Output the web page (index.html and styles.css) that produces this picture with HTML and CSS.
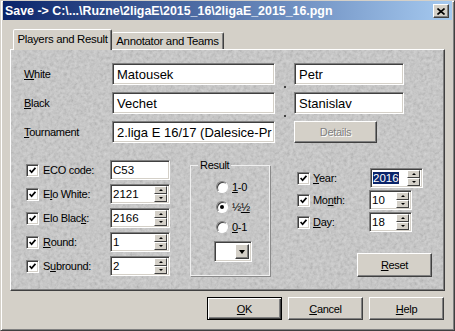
FILE: index.html
```html
<!DOCTYPE html>
<html lang="en">
<head>
  <meta charset="UTF-8" />
  <title>Save</title>
  <link rel="stylesheet" href="styles.css">
</head>
<body>
  <div class="window">
    <div class="titlebar">
      <span class="title">Save -&gt; C:\...\Ruzne\2ligaE\2015_16\2ligaE_2015_16.pgn</span>
      <div class="close">
        <svg width="8" height="7" viewBox="0 0 8 7"><path d="M0.5 0.5 L7.5 6.5 M7.5 0.5 L0.5 6.5" stroke="#000" stroke-width="1.6" fill="none"/></svg>
      </div>
    </div>

    <div class="dialog">
      <div class="tabs">
        <div class="tab active">Players and Result</div>
        <div class="tab">Annotator and Teams</div>
      </div>

      <div class="panel">
        <div class="names">
          <label><u>W</u>hite</label>
          <div class="field big">Matousek</div>
          <span class="dot"></span>
          <div class="field big">Petr</div>

          <label><u>B</u>lack</label>
          <div class="field big">Vechet</div>
          <span class="dot"></span>
          <div class="field big">Stanislav</div>

          <label><u>T</u>ournament</label>
          <div class="field big">2.liga E 16/17 (Dalesice-Pr</div>
          <span></span>
          <div class="btn disabled details">Details</div>
        </div>

        <div class="lower">
          <div class="col-left">
            <div class="row">
              <span class="check"><svg width="7" height="7" viewBox="0 0 7 7"><path d="M0.6 3 L2.6 5.2 L6.4 0.8" stroke="#000" stroke-width="1.7" fill="none"/></svg></span>
              <span class="lbl">ECO code:</span>
              <div class="field small">C53</div>
            </div>
            <div class="row">
              <span class="check"><svg width="7" height="7" viewBox="0 0 7 7"><path d="M0.6 3 L2.6 5.2 L6.4 0.8" stroke="#000" stroke-width="1.7" fill="none"/></svg></span>
              <span class="lbl">E<u>l</u>o White:</span>
              <div class="field small spin"><span class="val">2121</span><span class="spinner"><i class="up"></i><i class="down"></i></span></div>
            </div>
            <div class="row">
              <span class="check"><svg width="7" height="7" viewBox="0 0 7 7"><path d="M0.6 3 L2.6 5.2 L6.4 0.8" stroke="#000" stroke-width="1.7" fill="none"/></svg></span>
              <span class="lbl">Elo Blac<u>k</u>:</span>
              <div class="field small spin"><span class="val">2166</span><span class="spinner"><i class="up"></i><i class="down"></i></span></div>
            </div>
            <div class="row">
              <span class="check"><svg width="7" height="7" viewBox="0 0 7 7"><path d="M0.6 3 L2.6 5.2 L6.4 0.8" stroke="#000" stroke-width="1.7" fill="none"/></svg></span>
              <span class="lbl"><u>R</u>ound:</span>
              <div class="field small spin"><span class="val">1</span><span class="spinner"><i class="up"></i><i class="down"></i></span></div>
            </div>
            <div class="row">
              <span class="check"><svg width="7" height="7" viewBox="0 0 7 7"><path d="M0.6 3 L2.6 5.2 L6.4 0.8" stroke="#000" stroke-width="1.7" fill="none"/></svg></span>
              <span class="lbl">S<u>u</u>bround:</span>
              <div class="field small spin"><span class="val">2</span><span class="spinner"><i class="up"></i><i class="down"></i></span></div>
            </div>
          </div>

          <fieldset class="group">
            <legend>Result</legend>
            <div class="radio-row"><span class="radio"></span><span><u>1</u>-0</span></div>
            <div class="radio-row"><span class="radio on"></span><span>½<u>½</u></span></div>
            <div class="radio-row"><span class="radio"></span><span><u>0</u>-1</span></div>
            <div class="combo"><span class="combo-btn"><i></i></span></div>
          </fieldset>

          <div class="col-right">
            <div class="row">
              <span class="check"><svg width="7" height="7" viewBox="0 0 7 7"><path d="M0.6 3 L2.6 5.2 L6.4 0.8" stroke="#000" stroke-width="1.7" fill="none"/></svg></span>
              <span class="lbl date"><u>Y</u>ear:</span>
              <div class="field small spin year"><span class="val"><span class="sel">2016</span></span><span class="spinner"><i class="up"></i><i class="down"></i></span></div>
            </div>
            <div class="row">
              <span class="check"><svg width="7" height="7" viewBox="0 0 7 7"><path d="M0.6 3 L2.6 5.2 L6.4 0.8" stroke="#000" stroke-width="1.7" fill="none"/></svg></span>
              <span class="lbl date">Mo<u>n</u>th:</span>
              <div class="field small spin short"><span class="val">10</span><span class="spinner"><i class="up"></i><i class="down"></i></span></div>
            </div>
            <div class="row">
              <span class="check"><svg width="7" height="7" viewBox="0 0 7 7"><path d="M0.6 3 L2.6 5.2 L6.4 0.8" stroke="#000" stroke-width="1.7" fill="none"/></svg></span>
              <span class="lbl date"><u>D</u>ay:</span>
              <div class="field small spin short"><span class="val">18</span><span class="spinner"><i class="up"></i><i class="down"></i></span></div>
            </div>
            <div class="btn reset"><u>R</u>eset</div>
          </div>
        </div>
      </div>

      <div class="actions">
        <div class="btn default"><u>O</u>K</div>
        <div class="btn"><u>C</u>ancel</div>
        <div class="btn"><u>H</u>elp</div>
      </div>
    </div>
  </div>
</body>
</html>
```

FILE: styles.css
```css
* {
  box-sizing: border-box;
}
body {
  margin: 0;
  font-family: 'Liberation Sans', Arial, sans-serif;
  font-size: 11px;
  letter-spacing: -0.3px;
  color: #000;
}
.window {
  width: 455px;
  height: 331px;
  background: #d4d0c8;
  border: 1px solid;
  border-color: #d4d0c8 #404040 #404040 #d4d0c8;
  box-shadow: inset 1px 1px #fff, inset -1px -1px #808080;
  padding: 0 2px 2px;
  display: flex;
  flex-direction: column;
}
.titlebar {
  height: 19px;
  flex: none;
  background: linear-gradient(90deg, #0a246a, #a6caf0);
  display: flex;
  align-items: center;
  justify-content: space-between;
  padding: 0 3px 0 2px;
}
.title {
  color: #fff;
  font-weight: bold;
  font-size: 12.4px;
  letter-spacing: 0;
  white-space: nowrap;
}
.close {
  width: 16px;
  height: 14px;
  margin-top: 1px;
  background: #d4d0c8;
  border: 1px solid;
  border-color: #fff #404040 #404040 #fff;
  box-shadow: inset -1px -1px #808080;
  display: flex;
  align-items: center;
  justify-content: center;
}
.dialog {
  flex: 1;
  padding: 9px 7px 8px;
  display: flex;
  flex-direction: column;
}
.tabs {
  height: 20px;
  flex: none;
  display: flex;
  align-items: flex-end;
  margin-left: 3px;
  position: relative;
  z-index: 1;
}
.tab {
  height: 17px;
  border: 1px solid;
  border-bottom: none;
  border-color: #fff #404040 transparent #fff;
  box-shadow: inset -1px 0 #808080;
  border-radius: 2px 2px 0 0;
  background: #d4d0c8;
  display: flex;
  align-items: center;
  justify-content: center;
  white-space: nowrap;
  font-size: 11.4px;
}
.tab.active {
  width: 99px;
  height: 21px;
  margin-bottom: -1px;
  padding-bottom: 3px;
}
.tab:not(.active) {
  width: 112px;
  border-left: none;
}
.panel {
  height: 242px;
  flex: none;
  border: 1px solid;
  border-color: #fff #404040 #404040 #fff;
  box-shadow: inset -1px -1px #808080;
  background: #c9c9c9 url("data:image/svg+xml,%3Csvg xmlns='http://www.w3.org/2000/svg' width='160' height='160'%3E%3Cfilter id='n'%3E%3CfeTurbulence type='fractalNoise' baseFrequency='0.3' numOctaves='3' stitchTiles='stitch'/%3E%3CfeColorMatrix values='1 0 0 0 0 1 0 0 0 0 1 0 0 0 0 0 0 0 0 0.24'/%3E%3C/filter%3E%3Crect width='100%25' height='100%25' filter='url(%23n)'/%3E%3C/svg%3E");
  padding: 13px 0 0 13px;
}
.names {
  display: grid;
  grid-template-columns: 88px 163px 19px 110px;
  grid-auto-rows: 22px;
  row-gap: 7px;
  align-items: center;
}
.dot {
  align-self: end;
  justify-self: center;
  width: 2px;
  height: 2px;
  background: #444;
  margin-bottom: -3px;
}
.field {
  height: 22px;
  background: #fff;
  border: 1px solid;
  border-color: #808080 #fff #fff #808080;
  box-shadow: inset 1px 1px #404040, inset -1px -1px #d4d0c8;
  padding: 0 4px;
  display: flex;
  align-items: center;
  white-space: nowrap;
  overflow: hidden;
}
.field.big {
  font-size: 13px;
  letter-spacing: 0;
}
.btn {
  background: #d4d0c8;
  border: 1px solid;
  border-color: #fff #404040 #404040 #fff;
  box-shadow: inset -1px -1px #808080;
  display: flex;
  align-items: center;
  justify-content: center;
}
.btn.disabled {
  color: #808080;
  text-shadow: 1px 1px #fff;
}
.details {
  width: 83px;
  height: 22px;
}
.lower {
  display: flex;
  align-items: flex-start;
  margin-top: 17px;
}
.row {
  display: flex;
  align-items: center;
  height: 20px;
}
.col-left {
  margin-left: 2px;
  display: flex;
  flex-direction: column;
  gap: 4px;
}
.check {
  width: 13px;
  height: 13px;
  flex: none;
  background: #fff;
  border: 1px solid;
  border-color: #808080 #fff #fff #808080;
  box-shadow: inset 1px 1px #404040, inset -1px -1px #d4d0c8;
  display: flex;
  align-items: center;
  justify-content: center;
  margin-right: 4px;
}
.lbl {
  width: 67px;
  white-space: nowrap;
}
.field.small {
  width: 60px;
  height: 20px;
  padding: 0 2px;
  font-size: 11.5px;
  letter-spacing: 0;
}
.spin {
  justify-content: space-between;
}
.spinner {
  width: 13px;
  height: 16px;
  display: flex;
  flex-direction: column;
}
.spinner i {
  flex: 1;
  background: #d4d0c8;
  border: 1px solid;
  border-color: #fff #404040 #404040 #fff;
  display: flex;
  align-items: center;
  justify-content: center;
}
.spinner i::after {
  content: '';
  border-left: 2px solid transparent;
  border-right: 2px solid transparent;
}
.spinner .up::after {
  border-bottom: 2px solid #000;
}
.spinner .down::after {
  border-top: 2px solid #000;
}
.group {
  width: 80px;
  height: 117px;
  margin: -1px 0 0 20px;
  border: 1px solid #f0f0f0;
  box-shadow: 1px 1px #8a8a8a;
  padding: 6px 0 0 0;
}
.group legend {
  margin-left: 7px;
  padding: 0 2px;
  line-height: 12px;
}
.radio-row {
  height: 20px;
  margin-left: 25px;
  display: flex;
  align-items: center;
  gap: 4px;
}
.radio {
  width: 12px;
  height: 12px;
  border-radius: 50%;
  background: #fff;
  border: 1px solid;
  border-color: #808080 #fff #fff #808080;
  box-shadow: inset 1px 1px #404040;
  display: flex;
  align-items: center;
  justify-content: center;
}
.radio.on::after {
  content: '';
  width: 4px;
  height: 4px;
  border-radius: 50%;
  background: #000;
}
.combo {
  width: 38px;
  height: 21px;
  margin: 4px 0 0 23px;
  background: #fff;
  border: 1px solid;
  border-color: #808080 #fff #fff #808080;
  box-shadow: inset 1px 1px #404040, inset -1px -1px #d4d0c8;
  display: flex;
  justify-content: flex-end;
  padding: 2px;
}
.combo-btn {
  width: 14px;
  background: #d4d0c8;
  border: 1px solid;
  border-color: #fff #404040 #404040 #fff;
  box-shadow: inset -1px -1px #808080;
  display: flex;
  align-items: center;
  justify-content: center;
}
.combo-btn i {
  border-left: 3.5px solid transparent;
  border-right: 3.5px solid transparent;
  border-top: 4px solid #000;
}
.col-right {
  margin: 8px 0 0 27px;
  display: flex;
  flex-direction: column;
  gap: 2px;
}
.col-right .check {
  margin-right: 3px;
}
.lbl.date {
  width: 57px;
}
.field.year {
  width: 53px;
}
.field.short {
  width: 43px;
  margin-left: -1px;
}
.sel {
  background: #0a246a;
  color: #fff;
}
.reset {
  width: 75px;
  height: 24px;
  margin: 19px 0 0 60px;
}
.actions {
  display: flex;
  justify-content: flex-end;
  gap: 6px;
  margin-top: 6px;
  padding-right: 1px;
}
.actions .btn {
  width: 75px;
  height: 23px;
}
.actions .btn.default {
  border-color: #000;
  box-shadow: inset 1px 1px #fff, inset -1px -1px #404040, inset -2px -2px #808080;
}
```
